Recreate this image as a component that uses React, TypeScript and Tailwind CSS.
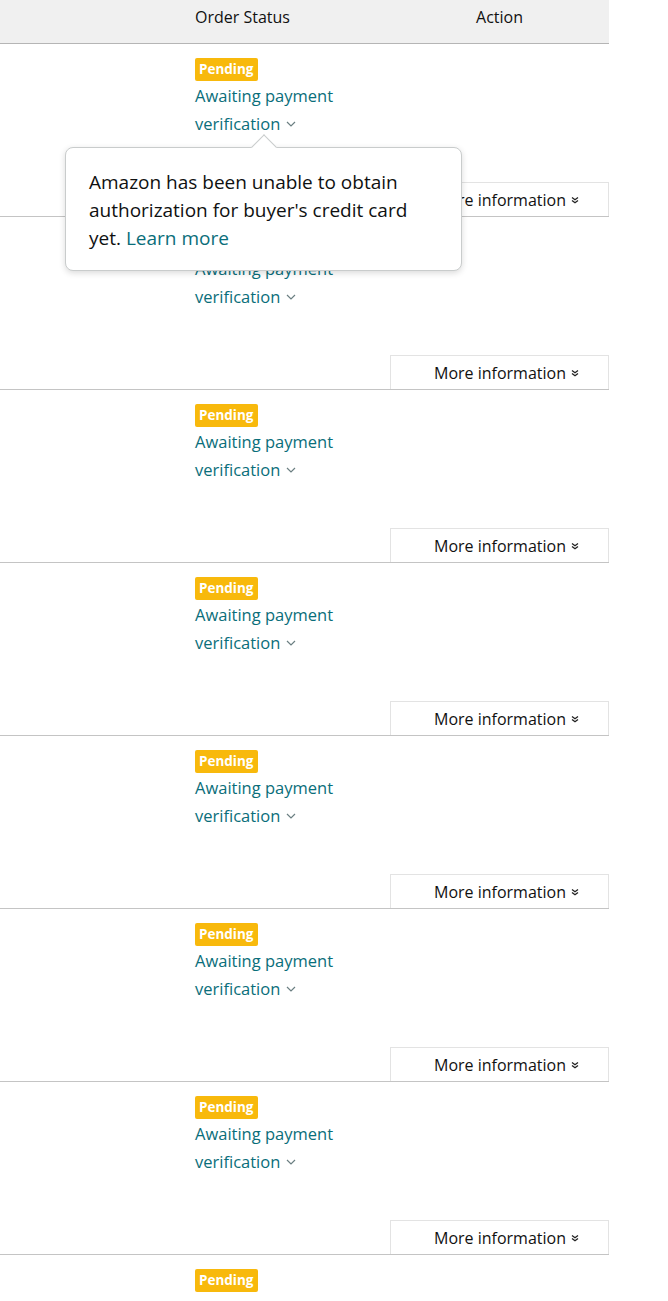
import React from "react";

const rows = Array.from({ length: 7 }, (_, i) => i);

function SmallChevron() {
  return (
    <svg width="10" height="6" viewBox="0 0 10 6" className="ml-[6px] inline-block">
      <path d="M1 1 L5 5 L9 1" fill="none" stroke="#6b7f82" strokeWidth="1.2" />
    </svg>
  );
}

function DoubleChevron() {
  return (
    <svg width="8" height="8" viewBox="0 0 8 8" className="ml-[5px] inline-block">
      <path d="M1 1.5 L4 3.8 L7 1.5 M1 4.5 L4 6.8 L7 4.5" fill="none" stroke="#222" strokeWidth="1.3" />
    </svg>
  );
}

function Tooltip() {
  return (
    <div className="absolute left-[65px] top-[103px] z-10 w-[397px] rounded-lg border border-[#c9cccc] bg-white pb-[18px] pl-[23px] pr-[30px] pt-[20px] text-[19px] leading-[28px] text-[#0f1111] shadow-[0_2px_6px_rgba(0,0,0,0.15)]">
      <div className="absolute left-[189px] top-[-10px] h-[18px] w-[18px] rotate-45 border-l border-t border-[#c9cccc] bg-white" />
      <p className="relative">
        Amazon has been unable to obtain authorization for buyer's credit card yet.{" "}
        <span className="text-[#0a6e7a]">Learn more</span>
      </p>
    </div>
  );
}

function Badge() {
  return (
    <span className="inline-block rounded-[2px] bg-[#f8b90c] px-[4px] text-[13.5px] font-bold leading-[23px] text-white">
      Pending
    </span>
  );
}

function Row({ index }: { index: number }) {
  return (
    <div className="relative grid h-[173px] grid-cols-[195px_195px_219px] border-b border-[#c4c4c4]">
      <div />
      <div className="pt-[12px]">
        <Badge />
        <div className="mt-[1px] text-[16.5px] leading-[28px] text-[#0a6e7a]">
          <div>Awaiting payment</div>
          <div className="flex items-center">
            verification
            <SmallChevron />
          </div>
        </div>
      </div>
      <div className="flex items-end">
        <button className="flex h-[34px] w-full items-center justify-center border-l border-r border-t border-[#e3e3e3] bg-white pl-[14px] text-[16px] text-[#111]">
          More information
          <DoubleChevron />
        </button>
      </div>
      {index === 0 && <Tooltip />}
    </div>
  );
}

export default function App() {
  return (
    <div className="h-[1301px] overflow-hidden bg-white font-['Open_Sans',sans-serif]">
      <div className="w-[609px]">
        <div className="grid h-[44px] grid-cols-[195px_195px_219px] border-b border-[#b5b5b5] bg-[#f0f0f0] text-[16px] text-[#111]">
          <div />
          <div className="pt-[5px]">Order Status</div>
          <div className="pt-[5px] text-center">Action</div>
        </div>
        {rows.map((i) => (
          <Row key={i} index={i} />
        ))}
        <div className="grid grid-cols-[195px_414px] pt-[12px]">
          <div />
          <div>
            <Badge />
          </div>
        </div>
      </div>
    </div>
  );
}
